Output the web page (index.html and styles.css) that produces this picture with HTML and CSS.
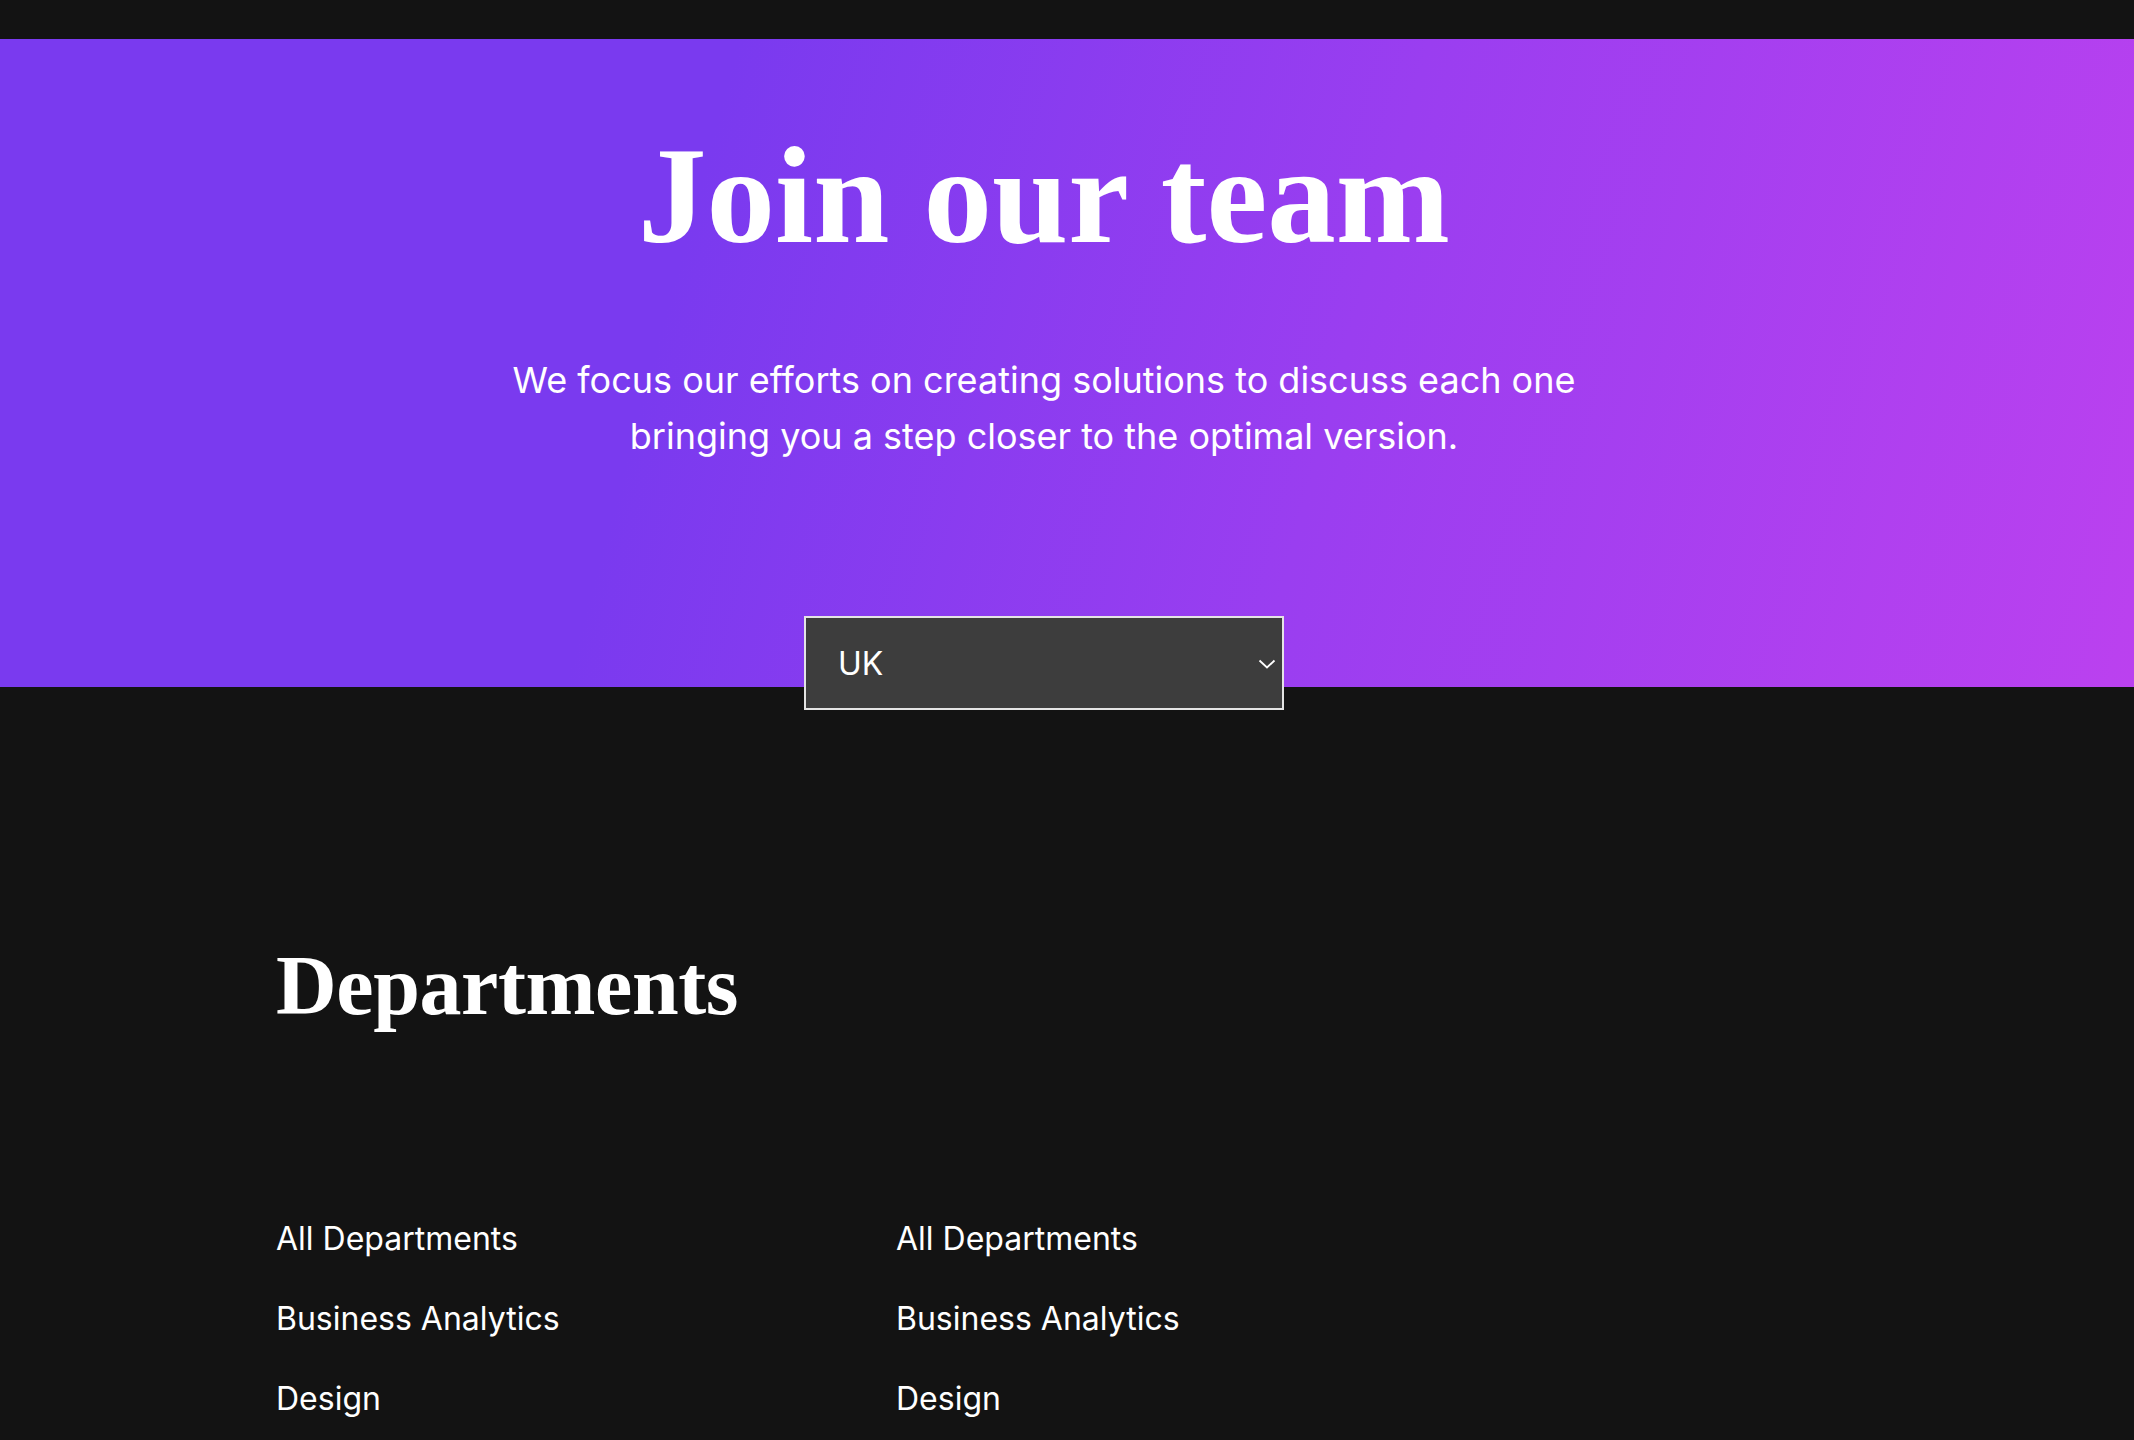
FILE: index.html
```html
<!DOCTYPE html>
<html lang="en">
<head>
<meta charset="utf-8">
<title>Join our team</title>
<link rel="stylesheet" href="styles.css">
</head>
<body>
<div class="topbar"></div>
<header class="hero">
  <div class="hero-inner">
    <h1 class="hero-title">Join our team</h1>
    <p class="hero-text">We focus our efforts on creating solutions to discuss each one<br>bringing you a step closer to the optimal version.</p>
    <div class="select-wrap">
      <select class="country-select" aria-label="Country">
        <option>UK</option>
        <option>US</option>
        <option>Germany</option>
      </select>
      <svg class="select-chevron" width="18" height="10" viewBox="0 0 18 10" aria-hidden="true"><path d="M1.5 1.5 L9 8.5 L16.5 1.5" fill="none" stroke="#ffffff" stroke-width="1.8"/></svg>
    </div>
  </div>
</header>
<section class="departments">
  <div class="container">
    <h2 class="section-title">Departments</h2>
    <div class="dept-grid">
      <ul class="dept-list">
        <li>All Departments</li>
        <li>Business Analytics</li>
        <li>Design</li>
      </ul>
      <ul class="dept-list">
        <li>All Departments</li>
        <li>Business Analytics</li>
        <li>Design</li>
      </ul>
    </div>
  </div>
</section>
</body>
</html>
```

FILE: styles.css
```css
html, body {
  margin: 0;
  padding: 0;
  background: #131313;
  color: #ffffff;
  font-family: "Inter", "Noto Sans", sans-serif;
}

.topbar {
  height: 39px;
  background: #131313;
}

.hero {
  height: 648px;
  background: linear-gradient(105deg, #7a3aef 0%, #7a3aef 32%, #9a3ef0 62%, #bb41ef 100%);
  padding-right: 46px;
  box-sizing: border-box;
}

.hero-inner {
  display: flex;
  flex-direction: column;
  align-items: center;
  padding-top: 89px;
}

.hero-title {
  margin: 0;
  font-family: "Liberation Serif", "Times New Roman", serif;
  font-weight: 700;
  font-size: 137px;
  line-height: 137px;
  letter-spacing: 0;
}

.hero-text {
  margin: 87px 0 0;
  font-size: 36px;
  line-height: 56px;
  text-align: center;
  font-weight: 400;
}

.select-wrap {
  position: relative;
  margin-top: 152px;
  width: 480px;
  height: 94px;
  z-index: 2;
}

.country-select {
  appearance: none;
  -webkit-appearance: none;
  width: 100%;
  height: 100%;
  box-sizing: border-box;
  border: 2px solid #e4e4e4;
  border-radius: 0;
  background: #3d3d3d;
  color: #ffffff;
  font-family: "Inter", "Noto Sans", sans-serif;
  font-size: 32px;
  padding: 0 60px 0 32px;
  outline: none;
}

.select-chevron {
  position: absolute;
  right: 8px;
  top: 43px;
  pointer-events: none;
}

.departments {
  padding-right: 46px;
  padding-top: 257px;
  padding-bottom: 80px;
}

.container {
  width: 1536px;
  margin: 0 auto;
}

.section-title {
  margin: 0;
  font-family: "Liberation Serif", "Times New Roman", serif;
  font-weight: 700;
  font-size: 84px;
  line-height: 84px;
  letter-spacing: -0.4px;
}

.dept-grid {
  display: grid;
  grid-template-columns: 620px 620px;
  margin-top: 191px;
}

.dept-list {
  list-style: none;
  margin: 0;
  padding: 0;
  display: flex;
  flex-direction: column;
  gap: 40px;
}

.dept-list li {
  font-size: 32px;
  line-height: 40px;
}
```
